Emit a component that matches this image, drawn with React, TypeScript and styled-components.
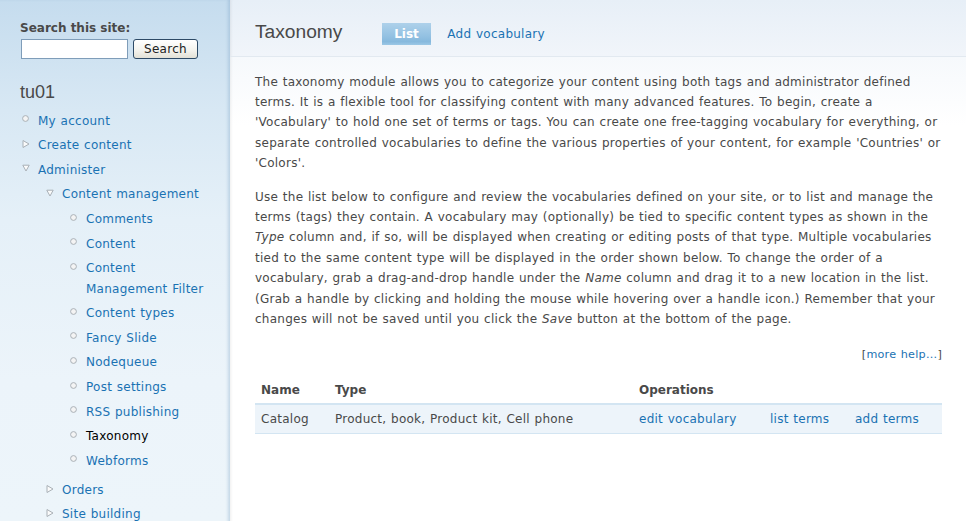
import React from "react";
import styled, { createGlobalStyle } from "styled-components";

const GlobalStyle = createGlobalStyle`
  html, body { margin: 0; padding: 0; }
  body {
    font-family: "DejaVu Sans", Verdana, sans-serif;
    font-size: 12px;
    line-height: 20.4px;
    letter-spacing: 0.25px;
    word-spacing: 0.6px;
    color: #494949;
    background: #ffffff;
  }
  #root { min-height: 100vh; }
  a { color: #1a72b3; text-decoration: none; }
`;

const Page = styled.div`
  display: flex;
  min-height: 100vh;
`;

const Sidebar = styled.aside`
  width: 230px;
  flex-shrink: 0;
  box-sizing: border-box;
  padding: 18px 15px 0 20px;
  background: linear-gradient(
    to bottom,
    #c5dcee 0px,
    #d8e8f4 110px,
    #e5f0f8 220px,
    #ecf4fa 380px,
    #edf5fa 521px
  );
  box-shadow: inset -3px 0 3px -1px rgba(120, 160, 195, 0.35);
`;

const SearchLabel = styled.label`
  display: block;
  font-weight: bold;
  letter-spacing: 0;
  word-spacing: 0;
  color: #494949;
`;

const SearchRow = styled.form`
  display: flex;
  gap: 5px;
  margin: 1px 0 0 1px;
`;

const SearchInput = styled.input`
  box-sizing: border-box;
  width: 107px;
  height: 20px;
  margin: 0;
  border: 1px solid #7f9db9;
  background: #ffffff;
  padding: 0 3px;
  font: inherit;
`;

const SearchButton = styled.button`
  box-sizing: border-box;
  width: 65px;
  height: 20px;
  margin: 0;
  padding: 0;
  border: 1px solid #2d4a66;
  border-radius: 3px;
  background: linear-gradient(to bottom, #ffffff 0%, #f3f2ec 60%, #e3e1d6 100%);
  font-family: "DejaVu Sans", Verdana, sans-serif;
  font-size: 12px;
  letter-spacing: 0.3px;
  line-height: 18px;
  color: #222222;
`;

const SiteName = styled.h2`
  margin: 22px 0 3px;
  font-family: "Liberation Sans", Arial, sans-serif;
  font-weight: normal;
  font-size: 18px;
  line-height: 22px;
  letter-spacing: 0;
  color: #494949;
`;

const MenuList = styled.ul<{ $nested?: boolean }>`
  list-style: none;
  padding: 0;
  margin: ${(p) => (p.$nested ? "0 0 4.5px 8px" : "0 0 0 2px")};
`;

const MenuItem = styled.li`
  display: grid;
  grid-template-columns: 16px 1fr;
  padding-top: 4.2px;
`;

const Marker = styled.span`
  display: flex;
  align-items: center;
  height: 20.4px;
  & > svg { margin-top: -3px; }
`;

const MenuBody = styled.div`
  min-width: 0;
`;

const MenuLink = styled.a<{ $active?: boolean }>`
  color: ${(p) => (p.$active ? "#000000" : "#1a72b3")};
`;

const Main = styled.main`
  flex: 1;
  min-width: 0;
  background: linear-gradient(
    to bottom,
    #e7eff7 0px,
    #f1f5fa 56px,
    #f6f9fc 57px,
    #ffffff 125px
  );
  box-shadow: inset 3px 0 3px -2px rgba(0, 0, 0, 0.07);
`;

const Header = styled.header`
  display: flex;
  align-items: flex-start;
  height: 57px;
  box-sizing: border-box;
  padding: 20px 24px 0 25px;
  border-bottom: 1px solid #e2e9f0;
`;

const Title = styled.h2`
  margin: 0;
  font-family: "Liberation Sans", Arial, sans-serif;
  font-weight: normal;
  font-size: 19.2px;
  line-height: 24px;
  letter-spacing: 0;
  color: #494949;
`;

const Tabs = styled.ul`
  display: flex;
  gap: 5px;
  list-style: none;
  margin: 3px 0 0 40px;
  padding: 0;
`;

const Tab = styled.a<{ $active?: boolean }>`
  display: block;
  height: 22px;
  line-height: 22px;
  padding: 0 11.75px;
  font-weight: ${(p) => (p.$active ? "bold" : "normal")};
  letter-spacing: ${(p) => (p.$active ? "0" : "0.25px")};
  color: ${(p) => (p.$active ? "#ffffff" : "#1a72b3")};
  background: ${(p) =>
    p.$active
      ? "linear-gradient(to bottom, #aed1ea 0%, #93c1e2 60%, #86b9dd 85%, #9cc8e6 100%)"
      : "transparent"};
`;

const Content = styled.div`
  padding: 14.5px 24px 20px 25px;
`;

const Para = styled.p`
  margin: 0 0 13.1px;
`;

const MoreHelp = styled.div`
  text-align: right;
  font-size: 11.2px;
  line-height: 17.3px;
  padding-top: 3px;
  color: #494949;
`;

const Table = styled.table`
  width: 100%;
  table-layout: fixed;
  border-collapse: collapse;
  margin-top: 14px;
`;

const Th = styled.th`
  text-align: left;
  font-weight: bold;
  letter-spacing: 0;
  word-spacing: 0;
  padding: 3.6px 6px 2.3px;
  border-bottom: 2px solid #d3e5f2;
  color: #494949;
`;

const Row = styled.tr`
  background: #edf4fa;
  border-bottom: 1px solid #d3e5f2;
`;

const Td = styled.td`
  padding: 3.6px 6px;
  white-space: nowrap;
`;

type Kind = "leaf" | "collapsed" | "expanded";

const BulletIcon = ({ kind }: { kind: Kind }) => (
  <svg width="8" height="8" viewBox="0 0 8 8">
    {kind === "leaf" && (
      <circle cx="3.5" cy="3.5" r="2.9" fill="#f4f4f4" stroke="#a9b0b6" strokeWidth="1" />
    )}
    {kind === "collapsed" && (
      <polygon points="1,0.5 7,4 1,7.5" fill="#fbfbfb" stroke="#a9b0b6" strokeWidth="1" strokeLinejoin="round" />
    )}
    {kind === "expanded" && (
      <polygon points="0.8,1.2 7.2,1.2 4,7" fill="#fbfbfb" stroke="#a9b0b6" strokeWidth="1" strokeLinejoin="round" />
    )}
  </svg>
);

type Node = { label: string; kind: Kind; active?: boolean; children?: Node[] };

const menu: Node[] = [
  { label: "My account", kind: "leaf" },
  { label: "Create content", kind: "collapsed" },
  {
    label: "Administer",
    kind: "expanded",
    children: [
      {
        label: "Content management",
        kind: "expanded",
        children: [
          { label: "Comments", kind: "leaf" },
          { label: "Content", kind: "leaf" },
          { label: "Content Management Filter", kind: "leaf" },
          { label: "Content types", kind: "leaf" },
          { label: "Fancy Slide", kind: "leaf" },
          { label: "Nodequeue", kind: "leaf" },
          { label: "Post settings", kind: "leaf" },
          { label: "RSS publishing", kind: "leaf" },
          { label: "Taxonomy", kind: "leaf", active: true },
          { label: "Webforms", kind: "leaf" },
        ],
      },
      { label: "Orders", kind: "collapsed" },
      { label: "Site building", kind: "collapsed" },
      { label: "Site configuration", kind: "collapsed" },
    ],
  },
];

const Menu = ({ items, nested }: { items: Node[]; nested?: boolean }) => (
  <MenuList $nested={nested}>
    {items.map((n) => (
      <MenuItem key={n.label}>
        <Marker>
          <BulletIcon kind={n.kind} />
        </Marker>
        <MenuBody>
          <MenuLink href="#" $active={n.active}>
            {n.label}
          </MenuLink>
          {n.children && <Menu items={n.children} nested />}
        </MenuBody>
      </MenuItem>
    ))}
  </MenuList>
);

export default function App() {
  return (
    <>
      <GlobalStyle />
      <Page>
        <Sidebar>
          <SearchLabel htmlFor="search">Search this site:</SearchLabel>
          <SearchRow onSubmit={(e) => e.preventDefault()}>
            <SearchInput id="search" type="text" />
            <SearchButton type="submit">Search</SearchButton>
          </SearchRow>
          <SiteName>tu01</SiteName>
          <Menu items={menu} />
        </Sidebar>
        <Main>
          <Header>
            <Title>Taxonomy</Title>
            <Tabs>
              <li>
                <Tab href="#" $active>
                  List
                </Tab>
              </li>
              <li>
                <Tab href="#">Add vocabulary</Tab>
              </li>
            </Tabs>
          </Header>
          <Content>
            <Para>
              The taxonomy module allows you to categorize your content using both tags and
              administrator defined terms. It is a flexible tool for classifying content with many
              advanced features. To begin, create a 'Vocabulary' to hold one set of terms or tags.
              You can create one free-tagging vocabulary for everything, or separate controlled
              vocabularies to define the various properties of your content, for example
              'Countries' or 'Colors'.
            </Para>
            <Para>
              Use the list below to configure and review the vocabularies defined on your site, or
              to list and manage the terms (tags) they contain. A vocabulary may (optionally) be
              tied to specific content types as shown in the <em>Type</em> column and, if so, will
              be displayed when creating or editing posts of that type. Multiple vocabularies tied
              to the same content type will be displayed in the order shown below. To change the
              order of a vocabulary, grab a drag-and-drop handle under the <em>Name</em> column and
              drag it to a new location in the list. (Grab a handle by clicking and holding the
              mouse while hovering over a handle icon.) Remember that your changes will not be
              saved until you click the <em>Save</em> button at the bottom of the page.
            </Para>
            <MoreHelp>
              [<a href="#">more help...</a>]
            </MoreHelp>
            <Table>
              <colgroup>
                <col style={{ width: 74 }} />
                <col style={{ width: 304 }} />
                <col style={{ width: 131 }} />
                <col style={{ width: 85 }} />
                <col />
              </colgroup>
              <thead>
                <tr>
                  <Th>Name</Th>
                  <Th>Type</Th>
                  <Th colSpan={3}>Operations</Th>
                </tr>
              </thead>
              <tbody>
                <Row>
                  <Td>Catalog</Td>
                  <Td>Product, book, Product kit, Cell phone</Td>
                  <Td>
                    <a href="#">edit vocabulary</a>
                  </Td>
                  <Td>
                    <a href="#">list terms</a>
                  </Td>
                  <Td>
                    <a href="#">add terms</a>
                  </Td>
                </Row>
              </tbody>
            </Table>
          </Content>
        </Main>
      </Page>
    </>
  );
}
